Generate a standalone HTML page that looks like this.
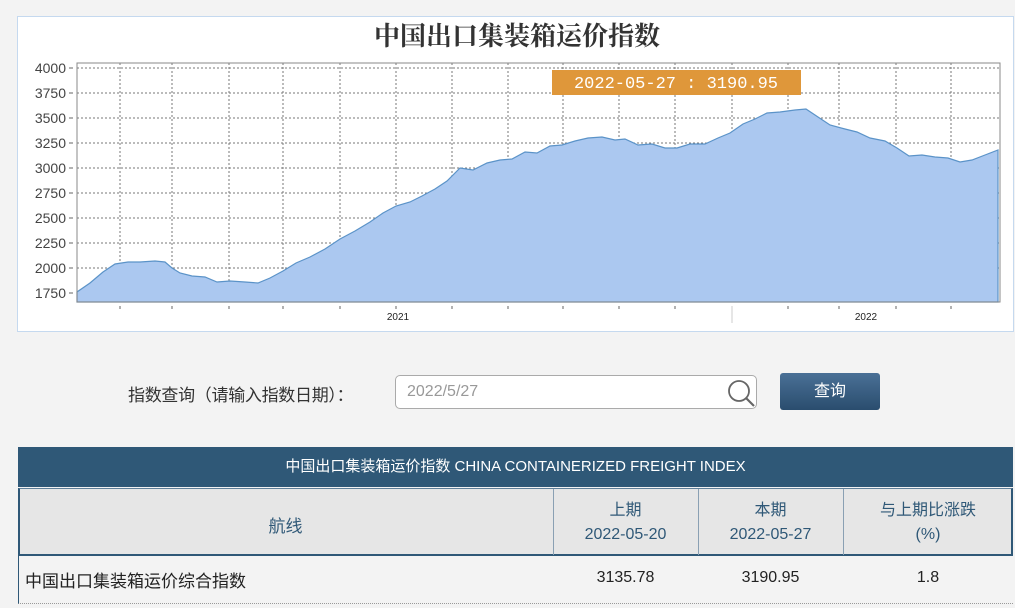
<!DOCTYPE html>
<html><head><meta charset="utf-8"><style>
body{margin:0;width:1015px;height:608px;background:#f3f3f3;font-family:"Liberation Sans","Noto Sans CJK SC",sans-serif;overflow:hidden;position:relative}
.box{position:absolute;left:17px;top:16px;width:995px;height:314px;background:#fff;border:1px solid #c5d9ef}
.abs{position:absolute}
</style></head><body>
<div class="box"></div>
<svg class="abs" style="left:0;top:0" width="1015" height="335">
<text x="517" y="45" text-anchor="middle" font-size="26" font-weight="bold" fill="#333" font-family="Noto Serif CJK SC,serif">中国出口集装箱运价指数</text>
<g stroke="#777" stroke-dasharray="2,2" stroke-width="1">
<line x1="77" x2="1000" y1="68" y2="68"/><line x1="77" x2="1000" y1="93" y2="93"/><line x1="77" x2="1000" y1="118" y2="118"/><line x1="77" x2="1000" y1="143" y2="143"/><line x1="77" x2="1000" y1="168" y2="168"/><line x1="77" x2="1000" y1="193" y2="193"/><line x1="77" x2="1000" y1="218" y2="218"/><line x1="77" x2="1000" y1="243" y2="243"/><line x1="77" x2="1000" y1="268" y2="268"/>
<line x1="120" x2="120" y1="63" y2="302"/><line x1="172" x2="172" y1="63" y2="302"/><line x1="229" x2="229" y1="63" y2="302"/><line x1="283" x2="283" y1="63" y2="302"/><line x1="340" x2="340" y1="63" y2="302"/><line x1="396" x2="396" y1="63" y2="302"/><line x1="452" x2="452" y1="63" y2="302"/><line x1="508" x2="508" y1="63" y2="302"/><line x1="563" x2="563" y1="63" y2="302"/><line x1="619" x2="619" y1="63" y2="302"/><line x1="675" x2="675" y1="63" y2="302"/><line x1="732" x2="732" y1="63" y2="302"/><line x1="788" x2="788" y1="63" y2="302"/><line x1="839" x2="839" y1="63" y2="302"/><line x1="896" x2="896" y1="63" y2="302"/><line x1="951" x2="951" y1="63" y2="302"/>
</g>
<polygon fill="#abc8f0" stroke="#5b93c8" stroke-width="1.2" points="77,302 77,292 90,283 103,272 115,264 128,262 140,262 155,261 165,262 172,268 180,273 192,276 205,277 217,282 230,281 245,282 258,283 270,278 283,271 296,263 310,257 325,249 340,239 355,231 370,222 383,213 396,206 410,202 422,196 435,189 447,181 460,168 473,170 487,163 500,160 512,159 525,152 537,153 550,146 562,145 575,141 588,138 602,137 615,140 625,139 638,145 652,144 665,148 677,148 690,144 705,144 718,138 730,133 743,124 755,119 767,113 780,112 795,110 806,109 818,117 830,125 845,129 857,132 870,138 885,141 897,148 909,156 922,155 935,157 948,158 960,162 972,160 985,155 998,150 998,302"/>
<rect x="77" y="63" width="923" height="239" fill="none" stroke="#888" stroke-width="1"/>
<g font-size="14" fill="#444" text-anchor="end">
<text x="66" y="73">4000</text><text x="66" y="98">3750</text><text x="66" y="123">3500</text><text x="66" y="148">3250</text><text x="66" y="173">3000</text><text x="66" y="198">2750</text><text x="66" y="223">2500</text><text x="66" y="248">2250</text><text x="66" y="273">2000</text><text x="66" y="298">1750</text>
</g>
<g stroke="#666"><line x1="69" x2="73" y1="68" y2="68"/><line x1="69" x2="73" y1="93" y2="93"/><line x1="69" x2="73" y1="118" y2="118"/><line x1="69" x2="73" y1="143" y2="143"/><line x1="69" x2="73" y1="168" y2="168"/><line x1="69" x2="73" y1="193" y2="193"/><line x1="69" x2="73" y1="218" y2="218"/><line x1="69" x2="73" y1="243" y2="243"/><line x1="69" x2="73" y1="268" y2="268"/><line x1="69" x2="73" y1="293" y2="293"/>
<line x1="732" x2="732" y1="306" y2="323" stroke="#ccc"/>
<line x1="120" x2="120" y1="306" y2="309"/><line x1="172" x2="172" y1="306" y2="309"/><line x1="229" x2="229" y1="306" y2="309"/><line x1="283" x2="283" y1="306" y2="309"/><line x1="340" x2="340" y1="306" y2="309"/><line x1="396" x2="396" y1="306" y2="309"/><line x1="452" x2="452" y1="306" y2="309"/><line x1="508" x2="508" y1="306" y2="309"/><line x1="563" x2="563" y1="306" y2="309"/><line x1="619" x2="619" y1="306" y2="309"/><line x1="675" x2="675" y1="306" y2="309"/><line x1="788" x2="788" y1="306" y2="309"/><line x1="839" x2="839" y1="306" y2="309"/><line x1="896" x2="896" y1="306" y2="309"/><line x1="951" x2="951" y1="306" y2="309"/></g>
<g font-size="10" fill="#222" text-anchor="middle"><text x="398" y="320">2021</text><text x="866" y="320">2022</text></g>
<rect x="552" y="70" width="249" height="25" fill="#df973a"/>
<text x="676" y="88" text-anchor="middle" font-size="17" fill="#fff" font-family="Liberation Mono,monospace">2022-05-27 : 3190.95</text>
</svg>
<div class="abs" style="left:128px;top:381px;font-size:17px;color:#333;letter-spacing:-0.3px">指数查询（请输入指数日期）：</div>
<div class="abs" style="left:395px;top:375px;width:362px;height:34px;background:#fff;border:1px solid #aaa;border-radius:5px;box-sizing:border-box"></div>
<div class="abs" style="left:407px;top:383px;font-size:16px;color:#999">2022/5/27</div>
<svg class="abs" style="left:725px;top:377px" width="32" height="32"><circle cx="14" cy="14" r="10" fill="none" stroke="#666" stroke-width="1.8"/><line x1="21" y1="21" x2="29" y2="29" stroke="#666" stroke-width="2.2"/></svg>
<div class="abs" style="left:780px;top:373px;width:100px;height:37px;border-radius:3px;background:linear-gradient(#4a7096,#2a4d6e);color:#fff;font-size:16px;text-align:center;line-height:37px">查询</div>
<div class="abs" style="left:18px;top:447px;width:995px;height:40px;background:#2f5877;color:#fff;font-size:15px;text-align:center;line-height:40px">中国出口集装箱运价指数 CHINA CONTAINERIZED FREIGHT INDEX</div>
<div class="abs" style="left:18px;top:488px;width:995px;height:68px;background:#e6e6e6;border:2px solid #2f5877;border-top:1px solid #5e7e98;box-sizing:border-box"></div>
<div class="abs" style="left:553px;top:489px;width:1px;height:66px;background:#8aa0b3"></div>
<div class="abs" style="left:698px;top:489px;width:1px;height:66px;background:#8aa0b3"></div>
<div class="abs" style="left:843px;top:489px;width:1px;height:66px;background:#8aa0b3"></div>
<div class="abs" style="left:18px;top:512px;width:535px;text-align:center;font-size:17px;color:#2f5877">航线</div>
<div class="abs" style="left:553px;top:499px;width:145px;text-align:center;font-size:16px;line-height:24px;color:#2f5877">上期<br>2022-05-20</div>
<div class="abs" style="left:698px;top:499px;width:145px;text-align:center;font-size:16px;line-height:24px;color:#2f5877">本期<br>2022-05-27</div>
<div class="abs" style="left:843px;top:499px;width:170px;text-align:center;font-size:16px;line-height:24px;color:#2f5877">与上期比涨跌<br>(%)</div>
<div class="abs" style="left:18px;top:556px;width:995px;height:48px;border-left:1px solid #2f5877;border-bottom:1px dotted #999;box-sizing:border-box"></div>
<div class="abs" style="left:25px;top:567px;font-size:17px;color:#222">中国出口集装箱运价综合指数</div>
<div class="abs" style="left:553px;top:569px;width:145px;text-align:center;font-size:16px;color:#222">3135.78</div>
<div class="abs" style="left:698px;top:569px;width:145px;text-align:center;font-size:16px;color:#222">3190.95</div>
<div class="abs" style="left:843px;top:569px;width:170px;text-align:center;font-size:16px;color:#222">1.8</div>
</body></html>
